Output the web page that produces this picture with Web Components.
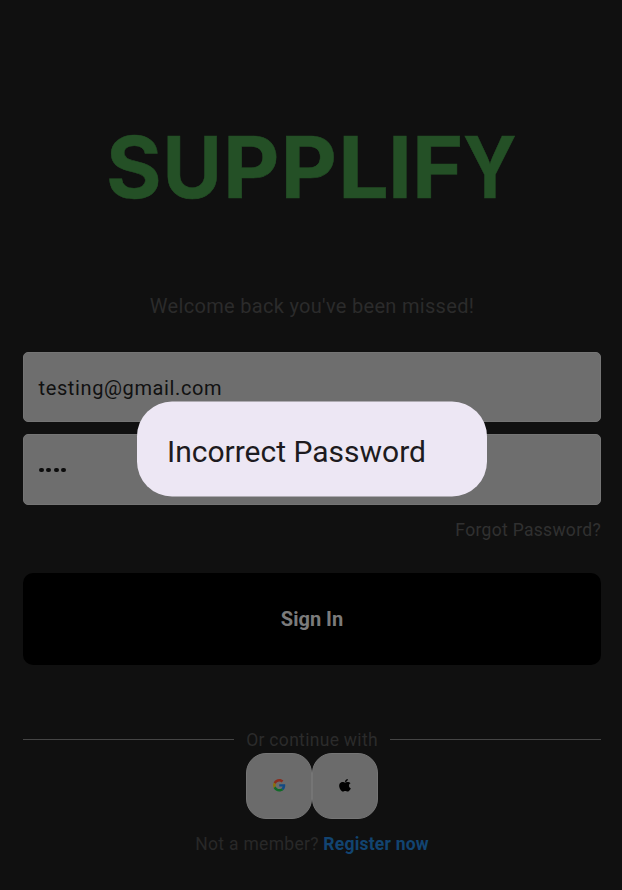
<!DOCTYPE html>
<html lang="en"><head><meta charset="utf-8"><title>Supplify</title>
<style>
html,body{margin:0;height:100%;background:#101010}
body{font-family:Roboto,sans-serif;overflow:hidden}
</style></head><body>
<login-page></login-page>
<script>
const define=(name,html)=>customElements.define(name,class extends HTMLElement{
  constructor(){super();this.attachShadow({mode:'open'}).innerHTML=html}
});
define('brand-logo',`<style>
:host{display:block;height:62px}
svg{display:block;overflow:visible}
text{font:700 85px Inter,sans-serif;fill:#245026;stroke:#245026;stroke-width:.5px}
</style>
<svg width="622" height="62"><text y="62"><tspan x="106">S</tspan><tspan x="162.500" textLength="59.500" lengthAdjust="spacingAndGlyphs">U</tspan><tspan x="223" textLength="56.500" lengthAdjust="spacingAndGlyphs">P</tspan><tspan x="280.500" textLength="56.500" lengthAdjust="spacingAndGlyphs">P</tspan><tspan x="338" textLength="51" lengthAdjust="spacingAndGlyphs">L</tspan><tspan x="388">I</tspan><tspan x="412" textLength="51.500" lengthAdjust="spacingAndGlyphs">F</tspan><tspan x="463" textLength="53.500" lengthAdjust="spacingAndGlyphs">Y</tspan></text></svg>`);
define('text-field',`<style>
:host{display:flex;align-items:center;box-sizing:border-box;height:70px;padding:2px 0 0 14.500px;border:1px solid #757575;border-radius:5px;background:#6e6e6e;color:#111;font-size:20px;letter-spacing:.62px}
</style><slot></slot>`);
define('pass-dots',`<style>
:host{display:flex;gap:2.900px;padding:0 0 1px .500px}
i{width:4.6px;height:4.6px;border-radius:50%;background:#0c0c0c}
</style><i></i><i></i><i></i><i></i>`);
define('primary-button',`<style>
:host{display:flex;align-items:center;justify-content:center;box-sizing:border-box;height:91.500px;padding-top:1px;border-radius:10px;background:#000;color:#7b7b7b;font-size:20px;font-weight:700}
</style><slot></slot>`);
define('labeled-divider',`<style>
:host{display:flex;align-items:center;gap:12px;color:#2b2b2b;font-size:17.5px;letter-spacing:.31px;line-height:20px}
:host::before,:host::after{content:"";height:1px;flex:1;background:#454545;margin-bottom:1px}
</style><slot></slot>`);
define('social-tile',`<style>
:host{display:flex;align-items:center;justify-content:center;box-sizing:border-box;width:66px;height:66px;padding-bottom:1px;border:1px solid #757575;border-radius:20px;background:#6b6b6b}
</style><slot></slot>`);
define('google-icon',`<style>:host,svg{display:block}svg{overflow:visible}</style>
<svg width="12.5" height="12.5" viewBox="0 0 48 48">
<path fill="#8a2c1c" d="M24 9.500c3.500 0 6.700 1.200 9.200 3.600l6.900-6.900C35.900 2.400 30.500 0 24 0 14.600 0 6.500 5.400 2.600 13.200l8 6.200C12.400 13.700 17.700 9.500 24 9.500z"/>
<path fill="#134a84" d="M47 24.600c0-1.600-.200-3.100-.400-4.600H24v9h12.900c-.600 3-2.200 5.500-4.700 7.200l7.700 6C44.400 38 47 31.800 47 24.600z"/>
<path fill="#8a7008" d="M10.500 28.600a14.500 14.500 0 0 1 0-9.200l-8-6.200a24 24 0 0 0 0 21.600z"/>
<path fill="#106a28" d="M24 48c6.500 0 11.900-2.100 15.900-5.800l-7.700-6c-2.200 1.400-4.900 2.300-8.200 2.300-6.300 0-11.600-4.200-13.500-9.900l-8 6.200C6.500 42.600 14.600 48 24 48z"/></svg>`);
define('apple-icon',`<style>:host,svg{display:block}svg{overflow:visible}</style>
<svg width="12" height="12.500" viewBox="2 0 20 24" preserveAspectRatio="none">
<path d="M12.150 6.900c-.950 0-2.420-1.080-3.960-1.040-2.040.030-3.910 1.180-4.960 3.010-2.120 3.680-.550 9.100 1.520 12.090 1.010 1.450 2.210 3.090 3.790 3.040 1.520-.070 2.090-.990 3.940-.990 1.830 0 2.350.990 3.960.950 1.640-.020 2.680-1.480 3.680-2.950 1.160-1.690 1.640-3.320 1.660-3.410-.040-.010-3.180-1.220-3.220-4.860-.020-3.040 2.480-4.490 2.600-4.560-1.430-2.090-3.620-2.320-4.390-2.380-2-.150-3.680 1.100-4.620 1.100zM15.530 3.830c.840-1.010 1.400-2.430 1.240-3.830-1.200.050-2.660.800-3.530 1.820-.780.900-1.460 2.340-1.270 3.710 1.340.100 2.710-.690 3.560-1.700z"/></svg>`);
define('message-dialog',`<style>
:host{box-sizing:border-box;width:350px;height:95px;padding:4px 30px 0;border-radius:35px;background:#ede7f4;color:#1d1b20;font-size:30px;line-height:36px;display:flex;align-items:center;white-space:nowrap}
</style><slot></slot>`);
define('login-page',`<style>
:host{display:block;position:relative;width:622px;height:890px;background:#101010;overflow:hidden}
brand-logo{padding-top:136px}
.welcome{margin-top:95px;height:26px;line-height:26px;text-align:center;color:#2b2b2b;font-size:20px;letter-spacing:.31px;padding-left:2px}
main{display:flex;flex-direction:column;padding:33px 21px 0 23px}
.pass{margin-top:12px;height:71px}
.forgot{align-self:flex-end;margin-top:14px;line-height:22px;color:#303030;font-size:17.5px;letter-spacing:.31px}
primary-button{margin-top:32px}
labeled-divider{margin-top:65.500px}
.social{display:flex;justify-content:center;margin-top:3px}
.join{display:flex;justify-content:center;gap:4.500px;margin-top:14px;line-height:22px;color:#282828;font-size:17.5px;letter-spacing:.31px}
b{color:#124471;letter-spacing:.21px}
message-dialog{position:absolute;left:137px;top:401px;transform:translateY(.5px)}
</style>
<brand-logo></brand-logo>
<div class="welcome">Welcome back you've been missed!</div>
<main>
<text-field>testing@gmail.com</text-field>
<text-field class="pass"><pass-dots></pass-dots></text-field>
<div class="forgot">Forgot Password?</div>
<primary-button>Sign In</primary-button>
<labeled-divider>Or continue with</labeled-divider>
<div class="social"><social-tile><google-icon></google-icon></social-tile><social-tile><apple-icon></apple-icon></social-tile></div>
<div class="join"><span>Not a member?</span><b>Register now</b></div>
</main>
<message-dialog>Incorrect Password</message-dialog>`);
</script></body></html>
